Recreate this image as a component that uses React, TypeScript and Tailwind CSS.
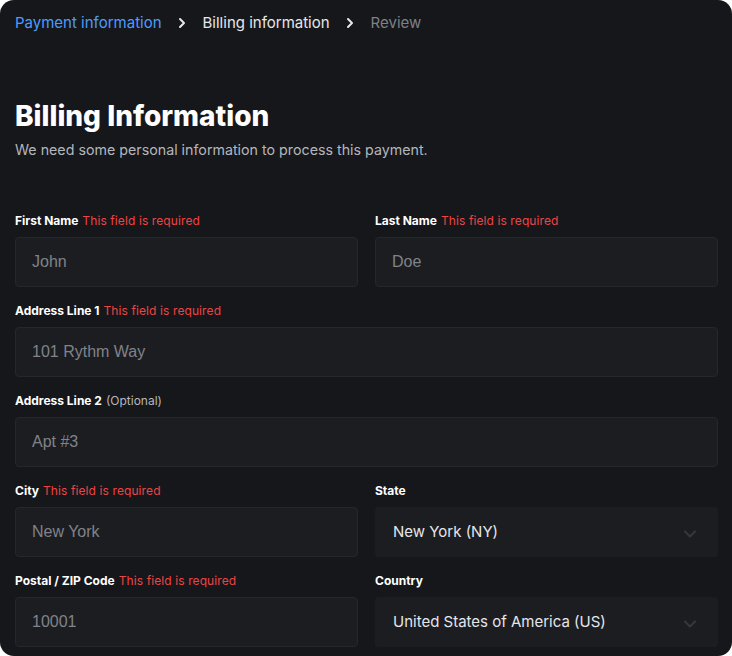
import { ChevronDown, ChevronRight } from "lucide-react";

const Label = ({ text, error, optional }: { text: string; error?: boolean; optional?: boolean }) => (
  <div className="h-4 mb-2 text-[12px] leading-4 whitespace-nowrap">
    <span className="font-bold text-white">{text}</span>
    {error && <span className="ml-1 text-[#ef4444] tracking-[0.1px]">This field is required</span>}
    {optional && <span className="ml-1 text-[#b5b8be]">(Optional)</span>}
  </div>
);

const Input = ({ placeholder }: { placeholder: string }) => (
  <div className="h-[50px] rounded-[4px] border border-[#26272b] bg-[#1c1d21] pl-4 flex items-center">
    <span className="text-[16px] text-[#808389]" style={{ fontFamily: '"Liberation Sans", Arial, sans-serif' }}>
      {placeholder}
    </span>
  </div>
);

const Select = ({ value }: { value: string }) => (
  <div className="h-[50px] rounded-[4px] bg-[#1c1d21] pl-[18px] pr-[18px] flex items-center justify-between">
    <span className="text-[15px] text-[#e4e6ea]">{value}</span>
    <ChevronDown size={20} strokeWidth={2.5} className="text-[#36373c] mt-1" />
  </div>
);

const Field = ({ children }: { children: React.ReactNode }) => <div className="mb-4">{children}</div>;

export default function App() {
  return (
    <div className="h-screen bg-white" style={{ fontFamily: "Inter, 'Noto Sans', sans-serif" }}>
      <div className="h-full overflow-hidden rounded-[14px] bg-[#16171b] px-[15px] pr-[14px]">
        {/* Breadcrumb */}
        <div className="pt-[13px] flex items-center text-[15px] leading-5">
          <span className="text-[#4c9cff]">Payment information</span>
          <ChevronRight size={16} strokeWidth={3} className="ml-3 mr-[13px] text-[#e8e8ea]" />
          <span className="text-[#e6e7ea]">Billing information</span>
          <ChevronRight size={16} strokeWidth={3} className="ml-3 mr-[13px] text-[#e8e8ea]" />
          <span className="text-[#7d8087]">Review</span>
        </div>

        <h1 className="mt-[66px] text-[28px] leading-[34px] font-extrabold text-white">Billing Information</h1>
        <p className="mt-[7px] text-[14.25px] leading-5 text-[#b3b6bc]">We need some personal information to process this payment.</p>

        <div className="mt-[53px] grid grid-cols-2 gap-x-[17px]">
          <Field>
            <Label text="First Name" error />
            <Input placeholder="John" />
          </Field>
          <Field>
            <Label text="Last Name" error />
            <Input placeholder="Doe" />
          </Field>
          <div className="col-span-2">
            <Field>
              <Label text="Address Line 1" error />
              <Input placeholder="101 Rythm Way" />
            </Field>
          </div>
          <div className="col-span-2">
            <Field>
              <Label text="Address Line 2" optional />
              <Input placeholder="Apt #3" />
            </Field>
          </div>
          <Field>
            <Label text="City" error />
            <Input placeholder="New York" />
          </Field>
          <Field>
            <Label text="State" />
            <Select value="New York (NY)" />
          </Field>
          <Field>
            <Label text="Postal / ZIP Code" error />
            <Input placeholder="10001" />
          </Field>
          <Field>
            <Label text="Country" />
            <Select value="United States of America (US)" />
          </Field>
        </div>
      </div>
    </div>
  );
}
